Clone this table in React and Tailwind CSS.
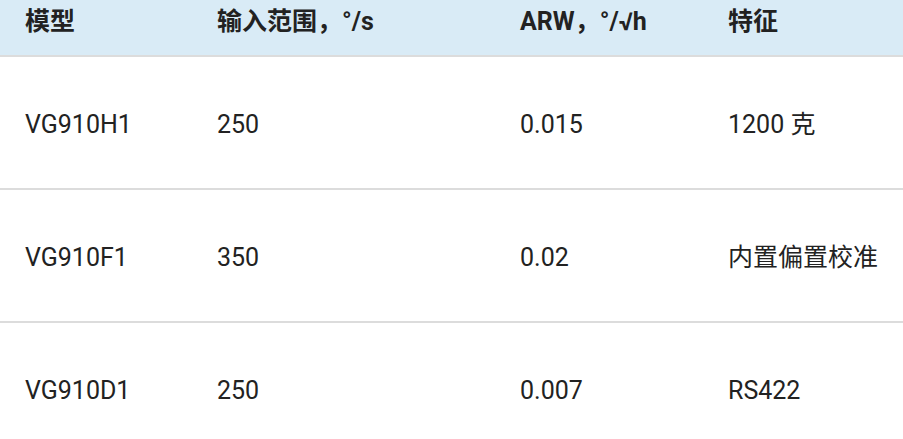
import React from 'react';

const rows = [
  { model: 'VG910H1', range: '250', arw: '0.015', feature: '1200 克' },
  { model: 'VG910F1', range: '350', arw: '0.02', feature: '内置偏置校准' },
  { model: 'VG910D1', range: '250', arw: '0.007', feature: 'RS422' },
];

const cols = 'grid grid-cols-[192px_303px_208px_1fr]';

export default function App() {
  return (
    <div
      className="w-[903px] h-[439px] overflow-hidden bg-white text-[#222]"
      style={{ fontFamily: 'Roboto, "Noto Sans CJK SC", sans-serif' }}
    >
      {/* Header */}
      <div className={`${cols} h-[57px] bg-[#d9ebf6] border-b-2 border-[#dcdcdc] pt-[6px] font-bold text-[25px] leading-[32px]`}>
        <div className="px-[25px]">模型</div>
        <div className="px-[25px]">输入范围，°/s</div>
        <div className="px-[25px]">ARW，°/√h</div>
        <div className="px-[25px]">特征</div>
      </div>

      {/* Rows */}
      {rows.map((r) => (
        <div
          key={r.model}
          className={`${cols} h-[133px] items-center border-b-2 border-[#dcdcdc] text-[25px] pt-[4px]`}
        >
          <div className="px-[25px]">{r.model}</div>
          <div className="px-[25px]">{r.range}</div>
          <div className="px-[25px]">{r.arw}</div>
          <div className="px-[25px]">{r.feature}</div>
        </div>
      ))}
    </div>
  );
}
